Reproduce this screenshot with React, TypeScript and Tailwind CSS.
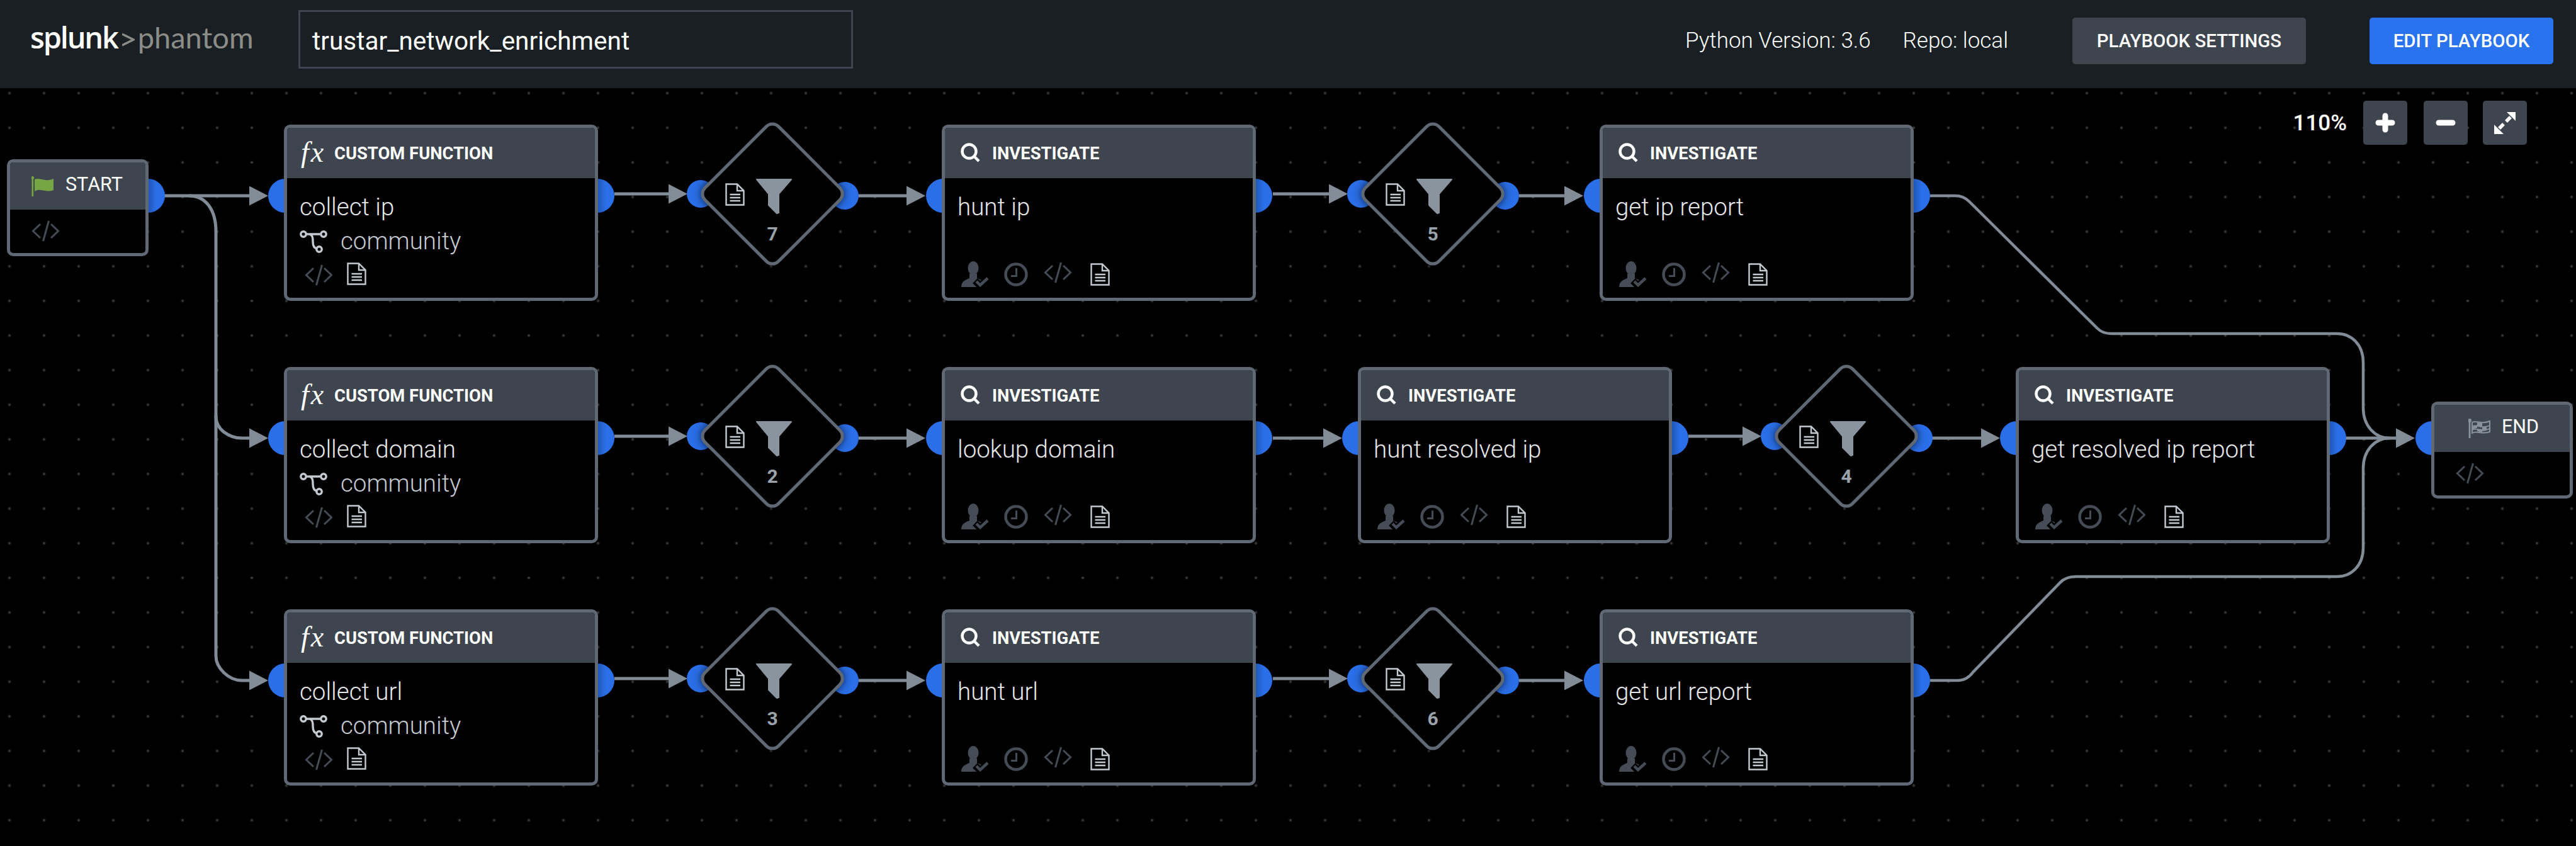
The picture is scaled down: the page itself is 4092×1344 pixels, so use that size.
import React from "react";

const ROW = 385;

type Step =
  | { kind: "fn"; x: number; title: string }
  | { kind: "inv"; x: number; title: string }
  | { kind: "filter"; cx: number; n: number };

const rows: Step[][] = [
  [
    { kind: "fn", x: 451, title: "collect ip" },
    { kind: "filter", cx: 1227, n: 7 },
    { kind: "inv", x: 1496, title: "hunt ip" },
    { kind: "filter", cx: 2276, n: 5 },
    { kind: "inv", x: 2541, title: "get ip report" },
  ],
  [
    { kind: "fn", x: 451, title: "collect domain" },
    { kind: "filter", cx: 1227, n: 2 },
    { kind: "inv", x: 1496, title: "lookup domain" },
    { kind: "inv", x: 2157, title: "hunt resolved ip" },
    { kind: "filter", cx: 2933, n: 4 },
    { kind: "inv", x: 3202, title: "get resolved ip report" },
  ],
  [
    { kind: "fn", x: 451, title: "collect url" },
    { kind: "filter", cx: 1227, n: 3 },
    { kind: "inv", x: 1496, title: "hunt url" },
    { kind: "filter", cx: 2276, n: 6 },
    { kind: "inv", x: 2541, title: "get url report" },
  ],
];

// [row, from x, arrow tip, y] straight links in row one coordinates
const links: [number, number, number, number][] = [
  [0, 976, 1092, 308],
  [0, 1364, 1470, 311],
  [0, 2022, 2141, 308],
  [0, 2413, 2515, 311],
  [1, 976, 1092, 308],
  [1, 1364, 1470, 311],
  [1, 2022, 2132, 311],
  [1, 2682, 2798, 308],
  [1, 3069, 3177, 311],
  [2, 976, 1092, 308],
  [2, 1364, 1470, 311],
  [2, 2022, 2141, 308],
  [2, 2413, 2515, 311],
];

const arrow = (tip: number, y: number) =>
  `${tip - 30},${y - 15.5} ${tip},${y} ${tip - 30},${y + 15.5}`;

function Wires() {
  const line = "#828c96";
  return (
    <svg className="absolute inset-0" width={4092} height={1204} viewBox="0 140 4092 1204" fill="none">
      <path d="M258 311H400" stroke={line} strokeWidth={5} />
      <path
        d="M300 311C326 311 343 332 343 368V662C343 682 364 696 384 696H400"
        stroke={line}
        strokeWidth={5}
      />
      <path d="M343 660V1042C343 1062 364 1081 384 1081H400" stroke={line} strokeWidth={5} />
      <polygon points={arrow(426, 311)} fill={line} />
      <polygon points={arrow(426, 696)} fill={line} />
      <polygon points={arrow(426, 1081)} fill={line} />
      {links.map(([r, from, tip, y], i) => (
        <g key={i}>
          <path d={`M${from} ${y + r * ROW}H${tip - 20}`} stroke={line} strokeWidth={5} />
          <polygon points={arrow(tip, y + r * ROW)} fill={line} />
        </g>
      ))}
      <path d="M3726 696H3812" stroke={line} strokeWidth={5} />
      <polygon points={arrow(3836, 696)} fill={line} />
      <path
        d="M3066 311H3106C3116 311 3122 314 3128 320L3332 522C3338 528 3344 530 3354 530H3712C3736 530 3754 548 3754 576V648C3754 676 3772 696 3796 696"
        stroke={line}
        strokeWidth={4.5}
      />
      <path
        d="M3066 1081H3110C3120 1081 3128 1076 3134 1068L3272 926C3278 919 3286 916 3298 916H3712C3736 916 3754 898 3754 870V744C3754 716 3772 696 3796 696"
        stroke={line}
        strokeWidth={4.5}
      />
    </svg>
  );
}

function DocIcon() {
  return (
    <svg width={31} height={36} viewBox="0 0 31 36" fill="none" stroke="#c5cad0" strokeWidth={2.4} className="shrink-0">
      <path d="M1.5 1.5H19L29.5 12V34.5H1.5Z" />
      <path d="M19 1.5V12H29.5" />
      <path d="M7.5 18H24M7.5 23H24M7.5 28H24" strokeWidth={2.6} />
    </svg>
  );
}

function CodeIcon() {
  return (
    <svg width={45} height={34} viewBox="0 0 45 34" fill="none" stroke="#454c56" strokeWidth={3} className="shrink-0">
      <path d="M14 6L2.5 17L14 28" />
      <path d="M27.5 1L18.5 33" />
      <path d="M31 6L42.5 17L31 28" />
    </svg>
  );
}

function PersonIcon() {
  return (
    <svg width={44} height={41} viewBox="0 0 44 41" className="shrink-0">
      <ellipse cx={19} cy={11} rx={8.5} ry={11} fill="#454c56" />
      <path d="M0 41C0 32 6 30 13 27V20H25V27C28 28 31 29 33 31V41Z" fill="#454c56" />
      <path d="M22 31L30 39L44 26" fill="none" stroke="#000" strokeWidth={11} />
      <path d="M24 32L30 38L42 27" fill="none" stroke="#454c56" strokeWidth={4.5} />
    </svg>
  );
}

function ClockIcon() {
  return (
    <svg width={38} height={38} viewBox="0 0 38 38" fill="none" stroke="#454c56" className="shrink-0">
      <circle cx={19} cy={19} r={16.5} strokeWidth={4.5} />
      <path d="M19.5 9V21.5H11" strokeWidth={3} />
    </svg>
  );
}

function CommunityIcon() {
  return (
    <svg width={44} height={37} viewBox="0 0 44 37" fill="none" stroke="#c5cad0" strokeWidth={3.4} className="shrink-0">
      <circle cx={6} cy={7} r={4.2} />
      <circle cx={38} cy={7} r={4.2} />
      <circle cx={31} cy={31} r={4.2} />
      <path d="M10 7H34" />
      <path d="M16 7C21 9 21 14 21 19C21 25 23 29 27 30" />
    </svg>
  );
}

function SearchIcon() {
  return (
    <svg width={31} height={31} viewBox="0 0 31 31" fill="none" stroke="#fff" className="shrink-0">
      <circle cx={13.5} cy={13.5} r={11} strokeWidth={4.5} />
      <path d="M21 21L29 29" strokeWidth={4.5} />
    </svg>
  );
}

function StartFlag() {
  return (
    <svg width={36} height={32} viewBox="0 0 36 32" fill="#75a544" className="shrink-0">
      <rect x={0.5} y={2} width={2.6} height={30} />
      <circle cx={1.8} cy={2.4} r={2.4} />
      <path d="M5 5C13 1 21 10 35 4V22C22 27 14 18 5 24Z" />
    </svg>
  );
}

function EndFlag() {
  return (
    <svg width={35} height={32} viewBox="0 0 35 32" fill="none" stroke="#8a939c" strokeWidth={2} className="shrink-0">
      <path d="M2 2V31" strokeWidth={2.8} />
      <circle cx={2} cy={3} r={2} fill="#8a939c" />
      <path d="M6 6C13 2 21 10 34 4V21C21 26 14 18 6 23Z" />
      <path d="M6 12C13 9 21 17 34 11M6 18C13 14 21 22 34 16" strokeWidth={1.6} />
      <path d="M14 6V12L22 13V7ZM7 13V17L14 15V10ZM22 14V20L29 19V13ZM14 16V20L22 22V17Z" fill="#8a939c" stroke="none" />
    </svg>
  );
}

function Port({ side, top }: { side: "left" | "right"; top: number }) {
  return (
    <div
      className={
        side === "left"
          ? "absolute -left-[25px] w-[54px] h-[54px] rounded-full bg-[#2a6fe8]"
          : "absolute -right-[26px] w-[54px] h-[54px] rounded-full bg-[linear-gradient(90deg,#1c4ca3_40%,#2a6fe8_75%)]"
      }
      style={{ top }}
    />
  );
}

function StepNode({ step, row }: { step: Exclude<Step, { kind: "filter" }>; row: number }) {
  const fn = step.kind === "fn";
  return (
    <div className="absolute w-[499px] h-[280px]" style={{ left: step.x, top: 58 + row * ROW }}>
      <Port side="left" top={86} />
      <Port side="right" top={86} />
      <div className="relative flex flex-col w-full h-full bg-black border-[5px] border-[#5f6873] rounded-[10px] overflow-hidden">
        <div className={`flex items-center h-[80px] shrink-0 bg-[#3e454e] ${fn ? "pl-[22px]" : "pl-[25px]"}`}>
          {fn ? (
            <span className="w-[53px] font-['Liberation_Serif',serif] italic text-[46px] leading-none text-white tracking-[3px] -mt-[3px]">
              fx
            </span>
          ) : (
            <span className="w-[50px] -mt-[1px]">
              <SearchIcon />
            </span>
          )}
          <span className="font-['Roboto',sans-serif] font-bold text-[27.4px] leading-none text-white mt-[3px]">
            {fn ? "CUSTOM FUNCTION" : "INVESTIGATE"}
          </span>
        </div>
        <div className="flex flex-col flex-1 pt-[24px] pb-[19px] pl-[20px]">
          <div className="font-['Roboto',sans-serif] font-light text-[38.5px] leading-[44px] text-[#e6e8ea]">
            {step.title}
          </div>
          {fn && (
            <div className="flex items-center gap-[21px] mt-[10px]">
              <CommunityIcon />
              <span className="font-['Roboto',sans-serif] font-light text-[38.5px] leading-[44px] text-[#c5cad0]">
                community
              </span>
            </div>
          )}
          {fn ? (
            <div className="flex items-end gap-[22px] mt-auto pl-[8px] mb-[1px]">
              <span className="-mb-[1px]">
                <CodeIcon />
              </span>
              <DocIcon />
            </div>
          ) : (
            <div className="flex items-center mt-auto pl-[6px] -mb-[2px]">
              <PersonIcon />
              <span className="ml-[24px]">
                <ClockIcon />
              </span>
              <span className="ml-[25px] -mt-[6px]">
                <CodeIcon />
              </span>
              <span className="ml-[29px]">
                <DocIcon />
              </span>
            </div>
          )}
        </div>
      </div>
    </div>
  );
}

function FilterNode({ cx, n, row }: { cx: number; n: number; row: number }) {
  const y = 168 + row * ROW; // centre of the diamond
  return (
    <div className="absolute w-[228px] h-[228px]" style={{ left: cx - 114, top: y - 114 }}>
      <div className="absolute -left-[22px] top-[92px] w-[44px] h-[44px] rounded-full bg-[#2a6fe8]" />
      <div className="absolute -right-[23px] top-[95px] w-[44px] h-[44px] rounded-full bg-[#2a6fe8]" />
      <div className="absolute left-[29px] top-[29px] w-[170px] h-[170px] rotate-45 bg-black border-[5px] border-[#5f6873] rounded-[16px] shadow-[0_0_14px_rgba(0,0,0,0.7)]" />
      <div className="relative flex flex-col items-center pt-[90px] h-full">
        <div className="flex items-start -ml-[44px]">
          <span className="mt-[7px] mr-[18px]">
            <DocIcon />
          </span>
          <svg width={57} height={56} viewBox="0 0 57 56" fill="#8a949e" stroke="#8a949e" strokeWidth={2} strokeLinejoin="round">
            <polygon points="1,1 56,1 36,24 36,54 33,55 20,42 20,24" />
          </svg>
        </div>
        <span className="mt-[15px] font-['Roboto',sans-serif] font-bold text-[30px] leading-[34px] text-[#9aa2ab]">
          {n}
        </span>
      </div>
    </div>
  );
}

function TerminalNode({ end }: { end?: boolean }) {
  return (
    <div
      className={`absolute w-[225px] h-[154px] ${end ? "left-[3862px] top-[498px]" : "left-[11px] top-[113px]"}`}
    >
      <Port side={end ? "left" : "right"} top={31} />
      <div className="relative flex flex-col w-full h-full bg-black border-[5px] border-[#5f6873] rounded-[10px] overflow-hidden">
        <div className={`flex items-center h-[75px] shrink-0 bg-[#3e454e] ${end ? "pl-[54px]" : "pl-[34px]"}`}>
          {end ? <EndFlag /> : <StartFlag />}
          <span className="ml-[18px] -mt-[4px] font-['Roboto',sans-serif] font-normal text-[30.5px] leading-none text-white">
            {end ? "END" : "START"}
          </span>
        </div>
        <div className="pt-[17px] pl-[34px]">
          <CodeIcon />
        </div>
      </div>
    </div>
  );
}

function ZoomButton({ children }: { children: React.ReactNode }) {
  return (
    <div className="flex items-center justify-center w-[70px] h-[70px] rounded-[5px] bg-[#3e454e]">{children}</div>
  );
}

export default function App() {
  return (
    <div className="flex flex-col w-[4092px] h-[1344px] bg-black overflow-hidden font-['Roboto',sans-serif]">
      <header className="flex items-center h-[140px] shrink-0 bg-[#1a1f24] pl-[48px] pr-[36px]">
        <div className="flex items-baseline w-[426px] shrink-0 -mt-[22px]">
          <span className="font-['Open_Sans',sans-serif] font-semibold text-[47px] leading-none text-white tracking-[-2.2px]">
            splunk
          </span>
          <svg width={20} height={24} viewBox="0 0 20 24" fill="none" stroke="#8c8c88" strokeWidth={3.4} className="ml-[7px] mr-[5px] self-center mt-[8px]">
            <path d="M0 3L18 12L0 21" />
          </svg>
          <span className="font-['Lato',sans-serif] font-normal text-[47px] leading-none text-[#8c8c88]">phantom</span>
        </div>
        <div className="flex items-center w-[881px] h-[93px] shrink-0 border-[3px] border-[#3e454e] pl-[19px] -mt-[15px]">
          <span className="text-[40.5px] font-normal text-white leading-none mt-[5px]">trustar_network_enrichment</span>
        </div>
        <div className="ml-auto flex items-center -mt-[10px]">
          <span className="text-[35px] font-light text-white">Python Version: 3.6</span>
          <span className="ml-[51px] text-[35px] font-light text-white">Repo: local</span>
          <button className="ml-[102px] w-[371px] h-[74px] rounded-[5px] bg-[#3e454e] text-[29.4px] font-medium text-white">
            PLAYBOOK SETTINGS
          </button>
          <button className="ml-[101px] w-[292px] h-[74px] rounded-[5px] bg-[#2a73ee] text-[29.4px] font-medium text-white">
            EDIT PLAYBOOK
          </button>
        </div>
      </header>
      <main className="relative flex-1 bg-black bg-[radial-gradient(circle,#4a4a4a_0,#2c2c2c_1.5px,transparent_3px)] bg-size-[55px_55px] bg-position-[-12.5px_-19.5px]">
        <Wires />
        <TerminalNode />
        <TerminalNode end />
        {rows.map((steps, r) =>
          steps.map((s, i) =>
            s.kind === "filter" ? (
              <FilterNode key={`${r}-${i}`} cx={s.cx} n={s.n} row={r} />
            ) : (
              <StepNode key={`${r}-${i}`} step={s} row={r} />
            )
          )
        )}
        <div className="absolute top-[20px] right-[78px] flex items-center">
          <span className="text-[35px] font-medium text-white leading-none">110%</span>
          <div className="ml-[26px]">
            <ZoomButton>
              <svg width={32} height={32} viewBox="0 0 32 32" stroke="#fff" strokeWidth={9} strokeLinecap="round">
                <path d="M16 5V27M5 16H27" />
              </svg>
            </ZoomButton>
          </div>
          <div className="ml-[26px]">
            <ZoomButton>
              <svg width={32} height={10} viewBox="0 0 32 10" stroke="#fff" strokeWidth={9} strokeLinecap="round">
                <path d="M5 5H27" />
              </svg>
            </ZoomButton>
          </div>
          <div className="ml-[24px]">
            <ZoomButton>
              <svg width={70} height={70} viewBox="0 0 70 70" fill="#fff">
                <polygon points="38,18 52,18 52,32" />
                <polygon points="18,38 18,53 33,53" />
                <path d="M44 26L37 33M33 37L26 44" stroke="#fff" strokeWidth={5.5} />
              </svg>
            </ZoomButton>
          </div>
        </div>
      </main>
    </div>
  );
}
